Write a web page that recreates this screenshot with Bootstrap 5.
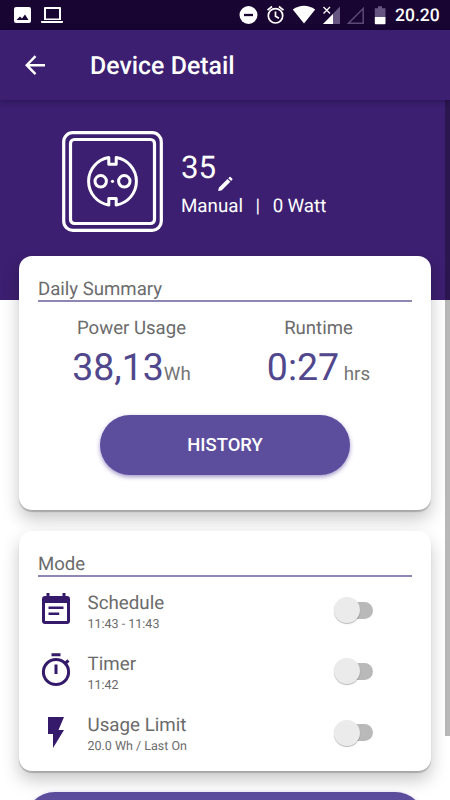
<!DOCTYPE html>
<html lang="en">
<head>
<meta charset="utf-8">
<meta name="viewport" content="width=device-width, initial-scale=1">
<title>Device Detail</title>
<link href="https://cdn.jsdelivr.net/npm/bootstrap@5.3.0/dist/css/bootstrap.min.css" rel="stylesheet">
<style>
  body { font-family: Roboto, "Liberation Sans", sans-serif; color: #6b6b6b; background: #fff; text-rendering: geometricPrecision; }
  svg { display: block; flex: none; }
  .screen { width: 450px; height: 800px; }
  .status { height: 30px; background: #190531; padding: 0 10px 0 13px; }
  .clock { font-size: 17.5px; font-weight: 500; line-height: 30px; margin: 2px 0 0 8px; width: 45px; }
  .appbar { height: 70px; background: #3c1f70; padding: 0 21px; box-shadow: 0 1px 6px rgba(10,0,40,.4); z-index: 2; }
  .appbar h1 { font-size: 24.9px; font-weight: 500; line-height: 30px; margin: 4px 0 0 41px; }
  .hero { height: 200px; background: #3c1f70; padding: 31px 0 0 62px; }
  .device { margin: 18px 0 0 18px; }
  .device-name { font-size: 31.25px; line-height: 38px; }
  .device-name svg { margin: 26px 0 0 1px; }
  .device-meta { font-size: 18.75px; line-height: 24px; margin-top: 2px; white-space: pre; word-spacing: -.45px; }
  .panel { border: 0; border-radius: 13px; padding: 0 19px; box-shadow: 0 2px 1px rgba(0,0,0,.2), 0 9px 17px rgba(0,0,0,.22); }
  .summary { height: 254px; margin: -44px 19px 0; padding-top: 21px; }
  .modes { height: 240px; margin: 21px 19px 0; padding-top: 21px; }
  .heading { font-size: 18.6px; font-weight: 400; line-height: 24px; margin: 0; border-bottom: 2px solid #8f87b3; height: 25px; }
  .stat-label { font-size: 18.6px; line-height: 24px; }
  .stat-value { font-size: 37.5px; line-height: 46px; margin-top: 5px; color: #51478c; }
  .stat-unit { font-size: 18.75px; color: #757575; }
  .btn-pill, .btn-pill:hover { background: #5c4e9d; color: #fff; border: 0; border-radius: 30px; height: 60px; box-shadow: 0 2px 4px rgba(70,50,150,.5); }
  .btn-history { width: 250px; font-size: 18.4px; font-weight: 500; margin: 18px auto 0; }
  .btn-next { width: 400px; margin: 21px auto 0; }
  .stats { margin-top: 14px; }
  .mode-row { height: 61.3px; padding-right: 37px; }
  .mode-icon { width: 49.5px; margin-bottom: 5px; }
  .mode-title { font-size: 18.75px; line-height: 23px; margin-top: 2px; }
  .mode-info { font-size: 12.5px; line-height: 19px; }
  .switch { width: 36px; height: 17px; border-radius: 9px; background: #b9b9b9; margin: 0 2px 3px 0; }
  .knob { width: 26px; height: 26px; border-radius: 50%; background: #ebebeb; margin-left: -3px; box-shadow: 0 1px 1px rgba(0,0,0,.28); }
  .scroll-thumb { right: 0; top: 100px; width: 5px; height: 636px; background: rgba(0,0,0,.28); z-index: 3; }
</style>
<script src="https://cdn.jsdelivr.net/npm/bootstrap@5.3.0/dist/js/bootstrap.bundle.min.js"></script>
</head>
<body>
<div class="screen position-relative overflow-hidden">
  <header class="status d-flex align-items-center text-white">
    <svg width="52" height="30" viewBox="0 0 52 30">
      <path fill="#fff" fill-rule="evenodd" d="M3 7H16Q18 7 18 9V21Q18 23 16 23H3Q1 23 1 21V9Q1 7 3 7ZM3.500 20H15.500L12 14.500 9 18.500 7 16.500Z"/>
      <path fill="#fff" fill-rule="evenodd" d="M32 7H47Q48 7 48 8V20H31V8Q31 7 32 7ZM33 9V18.500H46V9ZM28 21H50V22Q50 23 49 23H29Q28 23 28 22Z"/>
    </svg>
    <svg class="ms-auto" width="150" height="30" viewBox="237 0 150 30">
      <circle cx="248.500" cy="15" r="9" fill="#fff"/><path stroke="#190531" stroke-width="2.300" d="M244 15h9"/>
      <g fill="none" stroke="#fff" stroke-width="1.700"><circle cx="275.500" cy="15.800" r="7.200"/><path d="M275.500 11.500v4.700l3.400 2M267.500 10.200l4.500-3.700M283.500 10.200l-4.500-3.700"/></g>
      <path fill="#fff" d="M292.800 9.500Q304 2 315.200 9.500L304 23.500Z"/>
      <path fill="#655580" d="M340 6.500V24H323Z"/><path fill="#fff" d="M333 14V24H323Z"/>
      <path fill="#190531" d="M322 5h10v9h-10z"/><path stroke="#fff" stroke-width="1.300" d="M323.500 7l6.500 6.500M330 7l-6.500 6.500"/>
      <path fill="none" stroke="#5b4a75" stroke-width="1.500" d="M363.200 8.500V23.200H348.500Z"/>
      <path fill="#655580" d="M378 6.200h4v2h3.500V17h-10.700V8.200H378z"/><path fill="#fff" d="M374.800 17h10.700v6.300q0 .900-.900.900h-8.900q-.900 0-.900-.900z"/>
    </svg>
    <span class="clock">20.20</span>
  </header>
  <nav class="appbar d-flex align-items-center text-white position-relative">
    <svg width="28" height="28" viewBox="0 0 28 28"><path fill="none" stroke="#fff" stroke-width="2.400" d="M24 14.200H6M14.500 5.200L5.700 14.200L14.500 23.200"/></svg>
    <h1>Device Detail</h1>
  </nav>
  <section class="hero d-flex align-items-start text-white">
    <svg width="101" height="101" viewBox="0 0 101 101" fill="none" stroke="#fff">
      <rect x="1.700" y="1.700" width="97.600" height="97.600" rx="9" stroke-width="3.200"/>
      <rect x="8.500" y="8.500" width="84" height="84" rx="4" stroke-width="3.200"/>
      <path stroke-width="3" stroke-linejoin="round" d="M46.800 26.600A24 24 0 0 0 46.800 74V67.500H54.200V74A24 24 0 0 0 54.200 26.600V33.200H46.800Z"/>
      <circle cx="38.700" cy="50.300" r="5.700" stroke-width="3"/><circle cx="62.300" cy="50.300" r="5.700" stroke-width="3"/>
      <circle cx="50.500" cy="50.300" r="1.600" fill="#fff" stroke="none"/>
    </svg>
    <div class="device">
      <div class="device-name d-flex"><span>35</span><svg width="17" height="17" viewBox="0 0 17 17"><path fill="#fff" d="M2 12.500L10.500 4L13.300 6.800L4.800 15.300L2 16Q1.200 16 1.200 15.200ZM11.300 3.200L12.500 2Q13 1.500 13.600 2L15.300 3.700Q15.800 4.300 15.300 4.800L14.100 6Z"/></svg></div>
      <div class="device-meta">Manual   |   0 Watt</div>
    </div>
  </section>
  <section class="card panel summary">
    <h2 class="heading">Daily Summary</h2>
    <div class="row g-0 text-center stats">
      <div class="col-6"><div class="stat-label">Power Usage</div><div class="stat-value">38,13<span class="stat-unit">Wh</span></div></div>
      <div class="col-6"><div class="stat-label">Runtime</div><div class="stat-value">0:27<span class="stat-unit"> hrs</span></div></div>
    </div>
    <button class="btn btn-pill btn-history" type="button">HISTORY</button>
  </section>
  <section class="card panel modes">
    <h2 class="heading">Mode</h2>
    <div class="pt-1">
      <div class="mode-row d-flex align-items-center">
        <div class="mode-icon"><svg width="38" height="38" viewBox="0 0 38 38"><path fill="#351a6b" fill-rule="evenodd" d="M8.500 3h3v3h13V3h3v3H29q3 0 3 3v22q0 3-3 3H7q-3 0-3-3V9q0-3 3-3h1.500ZM7 13v18h22V13ZM10.500 16.500h15V19h-15ZM10.500 22.500h10.700V25H10.500Z"/></svg></div>
        <div><div class="mode-title">Schedule</div><div class="mode-info">11:43 - 11:43</div></div>
        <div class="switch ms-auto d-flex align-items-center"><div class="knob"></div></div>
      </div>
      <div class="mode-row d-flex align-items-center">
        <div class="mode-icon"><svg width="38" height="38" viewBox="0 0 38 38"><g fill="none" stroke="#351a6b" stroke-width="3"><circle cx="18" cy="21" r="12.600"/><path d="M13.500 3.800h9M18 13.500v9.500M27 12.500l3.500-3"/></g></svg></div>
        <div><div class="mode-title">Timer</div><div class="mode-info">11:42</div></div>
        <div class="switch ms-auto d-flex align-items-center"><div class="knob"></div></div>
      </div>
      <div class="mode-row d-flex align-items-center">
        <div class="mode-icon"><svg width="38" height="38" viewBox="0 0 38 38"><path fill="#351a6b" d="M10 4H26L20.500 17H26L15 35V21H10Z"/></svg></div>
        <div><div class="mode-title">Usage Limit</div><div class="mode-info">20.0 Wh / Last On</div></div>
        <div class="switch ms-auto d-flex align-items-center"><div class="knob"></div></div>
      </div>
    </div>
  </section>
  <button class="btn btn-pill btn-next d-block" type="button" aria-label="More"></button>
  <div class="scroll-thumb position-absolute"></div>
</div>
</body>
</html>
